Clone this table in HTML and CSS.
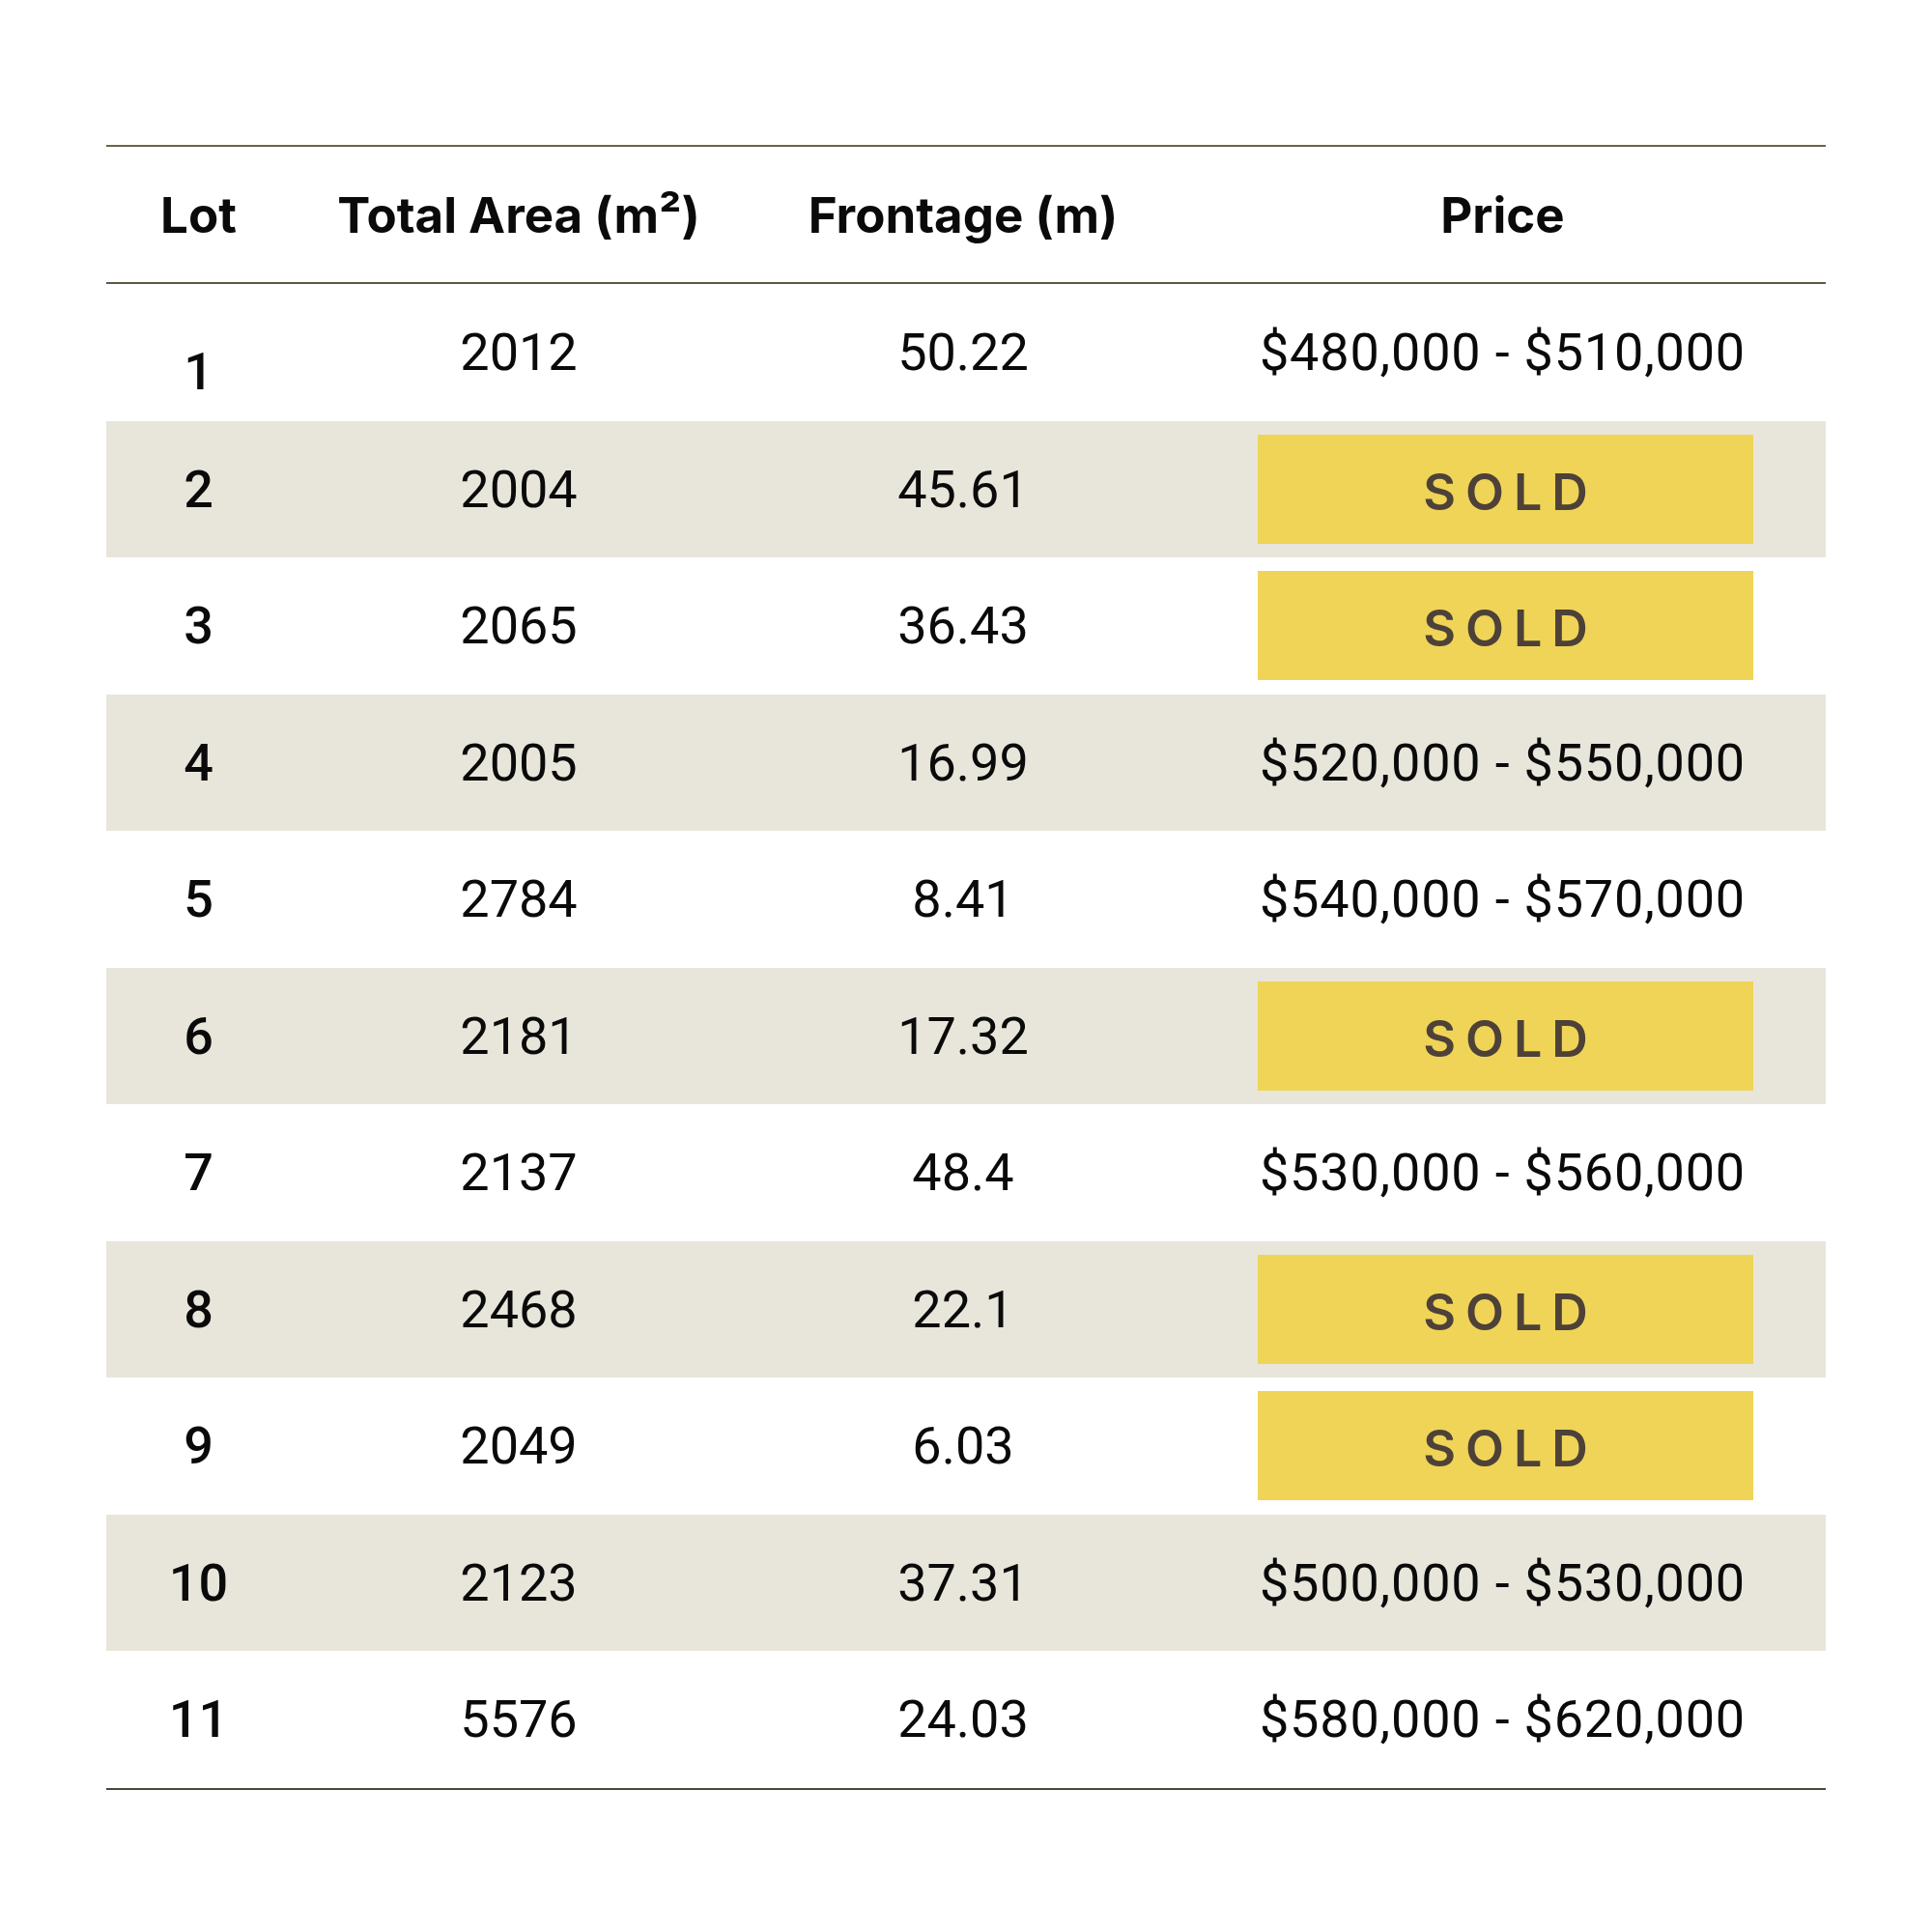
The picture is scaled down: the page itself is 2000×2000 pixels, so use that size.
FILE: index.html
```html
<!DOCTYPE html>
<html>
<head>
<meta charset="utf-8">
<link rel="stylesheet" href="styles.css">
</head>
<body>
<div class="page">
<table class="lots">
<colgroup>
<col class="c-lot"><col class="c-area"><col class="c-front"><col class="c-price">
</colgroup>
<thead>
<tr><th>Lot</th><th>Total Area (m²)</th><th>Frontage (m)</th><th>Price</th></tr>
</thead>
<tbody>
<tr><td class="lot first">1</td><td class="area">2012</td><td class="front">50.22</td><td class="price">$480,000 - $510,000</td></tr>
<tr class="alt"><td class="lot">2</td><td class="area">2004</td><td class="front">45.61</td><td class="price"><span class="sold">SOLD</span></td></tr>
<tr><td class="lot">3</td><td class="area">2065</td><td class="front">36.43</td><td class="price"><span class="sold">SOLD</span></td></tr>
<tr class="alt"><td class="lot">4</td><td class="area">2005</td><td class="front">16.99</td><td class="price">$520,000 - $550,000</td></tr>
<tr><td class="lot">5</td><td class="area">2784</td><td class="front">8.41</td><td class="price">$540,000 - $570,000</td></tr>
<tr class="alt"><td class="lot">6</td><td class="area">2181</td><td class="front">17.32</td><td class="price"><span class="sold">SOLD</span></td></tr>
<tr><td class="lot">7</td><td class="area">2137</td><td class="front">48.4</td><td class="price">$530,000 - $560,000</td></tr>
<tr class="alt"><td class="lot">8</td><td class="area">2468</td><td class="front">22.1</td><td class="price"><span class="sold">SOLD</span></td></tr>
<tr><td class="lot">9</td><td class="area">2049</td><td class="front">6.03</td><td class="price"><span class="sold">SOLD</span></td></tr>
<tr class="alt"><td class="lot">10</td><td class="area">2123</td><td class="front">37.31</td><td class="price">$500,000 - $530,000</td></tr>
<tr class="last"><td class="lot">11</td><td class="area">5576</td><td class="front">24.03</td><td class="price">$580,000 - $620,000</td></tr>
</tbody>
</table>
</div>
</body>
</html>
```
FILE: styles.css
```css
html, body {
  margin: 0;
  padding: 0;
  background: #ffffff;
}
.page {
  padding: 150px 0 0 110px;
}
.lots {
  border-collapse: collapse;
  table-layout: fixed;
  width: 1780px;
  font-family: Inter, "Liberation Sans", sans-serif;
  color: #0a0a0a;
}
.c-lot { width: 191px; }
.c-area { width: 472px; }
.c-front { width: 448px; }
.c-price { width: 669px; }
.lots thead tr {
  border-top: 2px solid #6b6344;
  border-bottom: 2px solid #5f5a45;
}
.lots th {
  height: 140px;
  padding: 0;
  font-size: 51px;
  font-weight: 700;
  text-align: center;
  vertical-align: middle;
  letter-spacing: 0;
}
.lots td {
  height: 141.5px;
  padding: 0;
  font-family: Roboto, "Liberation Sans", sans-serif;
  font-size: 54px;
  font-weight: 400;
  text-align: center;
  vertical-align: middle;
  letter-spacing: 0;
}
.lots td.lot {
  font-weight: 500;
}
.lots td.price {
  letter-spacing: 0.8px;
}
.lots td.first {
  padding-top: 40px;
  height: 101.5px;
}
.lots tr.alt td {
  background: #e8e6da;
}
.lots tr.last {
  border-bottom: 2px solid #4a453d;
}
.sold {
  display: flex;
  align-items: center;
  justify-content: center;
  box-sizing: border-box;
  width: 513px;
  height: 113px;
  margin-left: 81px;
  padding: 6px 0 0 10px;
  background: #efd457;
  color: #4d4138;
  font-family: Inter, "Liberation Sans", sans-serif;
  font-size: 52px;
  font-weight: 600;
  letter-spacing: 10px;
  word-spacing: 0;
}
```
